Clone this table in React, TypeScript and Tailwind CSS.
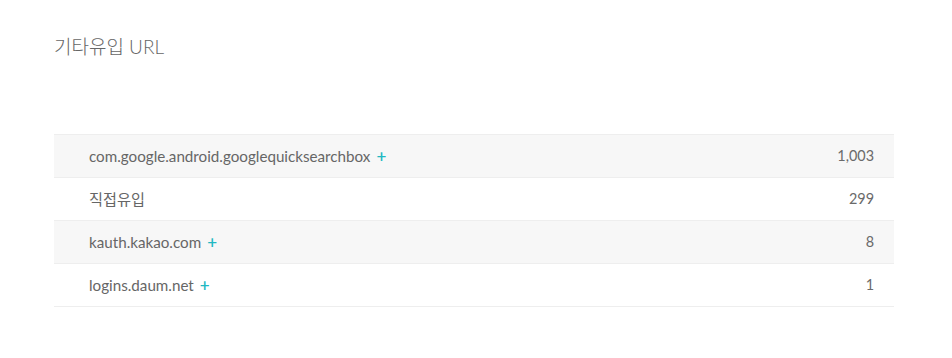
const rows = [
  { name: "com.google.android.googlequicksearchbox", count: "1,003", plus: true },
  { name: "직접유입", count: "299", plus: false },
  { name: "kauth.kakao.com", count: "8", plus: true },
  { name: "logins.daum.net", count: "1", plus: true },
];

export default function App() {
  return (
    <div
      className="h-[358px] w-[952px] bg-white px-[54px] pt-[36px]"
      style={{ fontFamily: "Lato, 'Noto Sans CJK KR', sans-serif" }}
    >
      <h2 className="text-[19px] font-light leading-[22px] text-[#666]">기타유입 URL</h2>
      <div className="mt-[76px] w-[840px] border-t border-[#eeeeee]">
        {rows.map((row, i) => (
          <div
            key={row.name}
            className={`flex h-[43px] items-center justify-between border-b border-[#eeeeee] pl-[35px] pr-[20px] text-[15.2px] text-[#666] ${
              i % 2 === 0 ? "bg-[#f7f7f7]" : "bg-white"
            }`}
          >
            <span className="flex items-center">
              {row.name}
              {row.plus && <span className="ml-[6px] text-[17px] font-semibold text-[#22b8c2]">+</span>}
            </span>
            <span className="text-[14.4px] text-[#6a6a6a]">{row.count}</span>
          </div>
        ))}
      </div>
    </div>
  );
}
